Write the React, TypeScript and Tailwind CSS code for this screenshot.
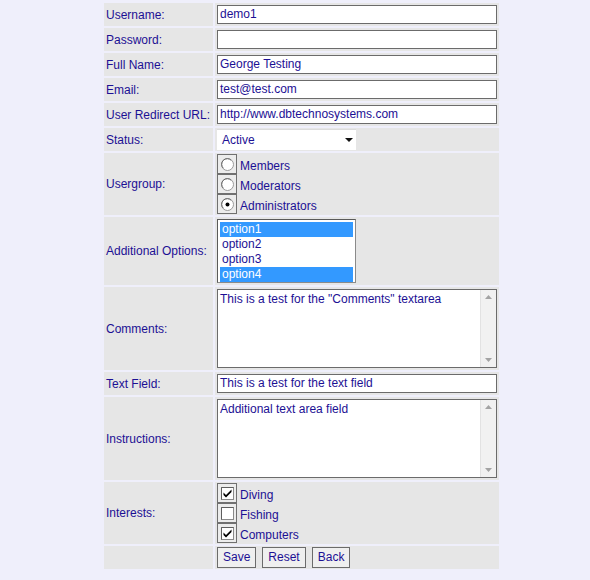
import React from "react";

const ink = "text-[#1c1094]";

const Row = ({ label, h, children }: { label: string; h: string; children?: React.ReactNode }) => (
  <>
    <div className={`bg-[#e6e6e6] flex items-center pl-[2px] ${h}`}>{label}</div>
    <div className={`bg-[#e6e6e6] flex items-center pl-[2px] ${h}`}>{children}</div>
  </>
);

const TextInput = ({ value, w = "w-[280px]" }: { value: string; w?: string }) => (
  <div className={`${w} h-[19px] bg-white border border-[#6b6b6b] pl-[2px] leading-[17px] whitespace-nowrap overflow-hidden`}>
    {value}
  </div>
);

const TextArea = ({ value }: { value: string }) => (
  <div className="w-[280px] h-[79px] bg-white border border-[#6b6b6b] flex">
    <div className="flex-1 pl-[2px] pt-[2px] leading-[15px]">{value}</div>
    <div className="w-[16px] bg-[#f1f1f1] border-l border-[#e2e2e2] flex flex-col justify-between items-center py-[5px]">
      <svg width="7" height="4" viewBox="0 0 7 4"><path d="M0 4 L3.5 0 L7 4 Z" fill="#a3a3a3" /></svg>
      <svg width="7" height="4" viewBox="0 0 7 4"><path d="M0 0 L3.5 4 L7 0 Z" fill="#a3a3a3" /></svg>
    </div>
  </div>
);

const Radio = ({ label, on }: { label: string; on?: boolean }) => (
  <div className="flex items-center h-[20px]">
    <div className="w-[20px] h-[20px] border border-[#707070] flex items-center justify-center bg-[#ececec]">
      <svg width="13" height="13" viewBox="0 0 13 13">
        <circle cx="6.5" cy="6.5" r="6" fill="#ffffff" stroke="#9a9a9a" strokeWidth="1" />
        <path d="M2.3 10.2 A5 5 0 0 1 10.2 2.3" fill="none" stroke="#6a6a6a" strokeWidth="1" />
        {on && <circle cx="6.5" cy="6.5" r="2" fill="#000" />}
      </svg>
    </div>
    <span className="ml-[3px] relative top-[2px]">{label}</span>
  </div>
);

const Check = ({ label, on }: { label: string; on?: boolean }) => (
  <div className="flex items-center h-[20px]">
    <div className="w-[20px] h-[20px] border border-[#707070] flex items-center justify-center bg-[#ececec]">
      <svg width="13" height="13" viewBox="0 0 13 13">
        <rect x="0.5" y="0.5" width="12" height="12" fill="#ffffff" stroke="#8a8a8a" />
        <path d="M0.5 12.5 V0.5 H12.5" fill="none" stroke="#5e5e5e" />
        {on && <path d="M2.5 5.5 L5 8 L10.5 2.5 L10.5 5 L5 10.5 L2.5 8 Z" fill="#000" />}
      </svg>
    </div>
    <span className="ml-[3px] relative top-[2px]">{label}</span>
  </div>
);

const Btn = ({ label }: { label: string }) => (
  <div className="h-[21px] px-[5px] border border-[#6b6b6b] bg-[#efefef] flex items-center leading-[19px] text-[12px]">{label}</div>
);

export default function App() {
  const opts = [
    { t: "option1", on: true },
    { t: "option2" },
    { t: "option3" },
    { t: "option4", on: true },
  ];
  return (
    <div className={`min-h-[580px] bg-[#efeffb] pt-[3px] pl-[104px] text-[12px] ${ink}`} style={{ fontFamily: '"Liberation Sans", Arial, sans-serif' }}>
      <div className="grid grid-cols-[109px_284px] gap-[2px]">
        <Row label="Username:" h="h-[23px]"><TextInput value="demo1" /></Row>
        <Row label="Password:" h="h-[23px]"><TextInput value="" /></Row>
        <Row label="Full Name:" h="h-[23px]"><TextInput value="George Testing" /></Row>
        <Row label="Email:" h="h-[23px]"><TextInput value="test@test.com" /></Row>
        <Row label="User Redirect URL:" h="h-[23px]"><TextInput value="http://www.dbtechnosystems.com" /></Row>
        <Row label="Status:" h="h-[23px]">
          <div className="w-[139px] h-[21px] bg-white border-t border-[#dcdcdc] flex items-center justify-between pl-[5px] pr-[3px]">
            <span>Active</span>
            <svg width="8" height="4" viewBox="0 0 8 4"><path d="M0 0 H8 L4 4 Z" fill="#111" /></svg>
          </div>
        </Row>
        <Row label="Usergroup:" h="h-[62px]">
          <div className="flex flex-col">
            <Radio label="Members" />
            <Radio label="Moderators" />
            <Radio label="Administrators" on />
          </div>
        </Row>
        <Row label="Additional Options:" h="h-[68px]">
          <div className="w-[139px] h-[64px] bg-white border border-[#8a8a8a] border-t-[#5a5a5a] border-l-[#5a5a5a] p-[2px] pt-[2px]">
            {opts.map((o) => (
              <div key={o.t} className={`h-[15px] leading-[15px] pl-[2px] ${o.on ? "bg-[#3399ff] text-white" : ""}`}>{o.t}</div>
            ))}
          </div>
        </Row>
        <Row label="Comments:" h="h-[83px]"><TextArea value={'This is a test for the "Comments" textarea'} /></Row>
        <Row label="Text Field:" h="h-[23px]"><TextInput value="This is a test for the text field" /></Row>
        <Row label="Instructions:" h="h-[83px]"><TextArea value="Additional text area field" /></Row>
        <Row label="Interests:" h="h-[62px]">
          <div className="flex flex-col">
            <Check label="Diving" on />
            <Check label="Fishing" />
            <Check label="Computers" on />
          </div>
        </Row>
        <Row label="" h="h-[23px]">
          <div className="flex gap-[6px]">
            <Btn label="Save" />
            <Btn label="Reset" />
            <Btn label="Back" />
          </div>
        </Row>
      </div>
    </div>
  );
}
